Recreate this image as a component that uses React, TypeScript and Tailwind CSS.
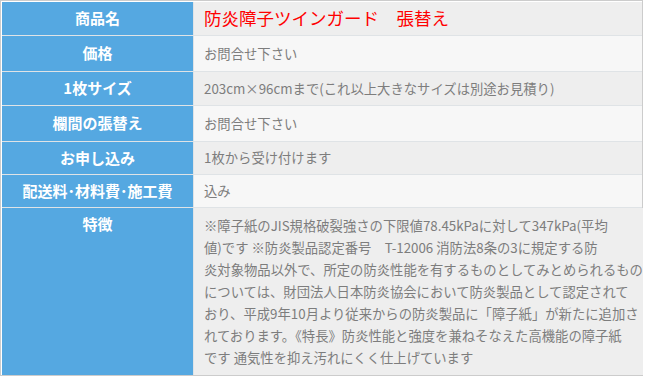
import type { ReactNode } from 'react';

type Row = {
  label: string;
  height: string;
  shade: string;
  top?: boolean;
  content: ReactNode;
};

const features = [
  '※障子紙のJIS規格破裂強さの下限値78.45kPaに対して347kPa(平均',
  '値)です ※防炎製品認定番号　T-12006 消防法8条の3に規定する防',
  '炎対象物品以外で、所定の防炎性能を有するものとしてみとめられるもの',
  'については、財団法人日本防炎協会において防炎製品として認定されて',
  'おり、平成9年10月より従来からの防炎製品に「障子紙」が新たに追加さ',
  'れております。《特長》防炎性能と強度を兼ねそなえた高機能の障子紙',
  'です 通気性を抑え汚れにくく仕上げています',
];

const rows: Row[] = [
  {
    label: '商品名',
    height: 'h-[33px]',
    shade: 'bg-[#eeeeee]',
    content: <span className="text-[17.5px] text-[#ff0000]">防炎障子ツインガード　張替え</span>,
  },
  { label: '価格', height: 'h-[35px]', shade: 'bg-[#f7f7f7]', content: 'お問合せ下さい' },
  {
    label: '1枚サイズ',
    height: 'h-[33px]',
    shade: 'bg-[#eeeeee]',
    content: '203cm×96cmまで(これ以上大きなサイズは別途お見積り)',
  },
  { label: '欄間の張替え', height: 'h-[35px]', shade: 'bg-[#f7f7f7]', content: 'お問合せ下さい' },
  { label: 'お申し込み', height: 'h-[32px]', shade: 'bg-[#eeeeee]', content: '1枚から受け付けます' },
  { label: '配送料･材料費･施工費', height: 'h-[32px]', shade: 'bg-[#f7f7f7]', content: '込み' },
  {
    label: '特徴',
    height: 'h-[167px]',
    shade: 'bg-[#eeeeee]',
    top: true,
    content: (
      <div className="leading-[22px]">
        {features.map((line) => (
          <div key={line} className="whitespace-nowrap">
            {line}
          </div>
        ))}
      </div>
    ),
  },
];

export default function App() {
  return (
    <div className="w-[645px] h-[377px] bg-white font-['Noto_Sans_CJK_JP','Noto_Sans',sans-serif]">
      <div className="w-[643px] border border-[#cccccc] pl-px pt-px bg-white">
        <div className="flex flex-col gap-px bg-[#dfe3e6]">
          {rows.map((row) => (
            <div key={row.label} className={`flex gap-px ${row.height}`}>
              <div
                className={`w-[191px] shrink-0 bg-[#55a8e1] text-white text-[15px] font-bold flex justify-center ${
                  row.top ? 'items-start pt-[5px]' : 'items-center'
                }`}
              >
                {row.label}
              </div>
              <div
                className={`flex-1 ${row.shade} text-[#7d7d7d] text-[13.33px] pl-[10px] flex ${
                  row.top ? 'items-start pt-[7px]' : 'items-center'
                }`}
              >
                {row.content}
              </div>
            </div>
          ))}
        </div>
      </div>
    </div>
  );
}
